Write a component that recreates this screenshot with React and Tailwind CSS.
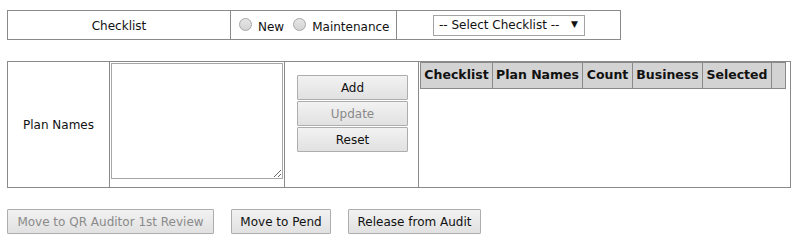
import React from "react";

const btn =
  "h-[25px] border border-[#adadad] bg-gradient-to-b from-[#f2f2f2] to-[#e1e1e1] text-[12px] leading-none flex items-center justify-center rounded-[1px]";

function Radio({ label }) {
  return (
    <label className="flex items-center">
      <span className="w-[13px] h-[13px] rounded-full border border-[#a6a6a6] bg-gradient-to-b from-[#e6e6e6] to-[#d4d4d4] mr-[6px] mt-[-2px]" />
      <span className="mt-[3px]">{label}</span>
    </label>
  );
}

export default function App() {
  return (
    <div
      className="bg-white w-[797px] h-[240px] text-[12px] text-[#111] pt-[10px] pl-[7px]"
      style={{ fontFamily: '"DejaVu Sans", Verdana, sans-serif' }}
    >
      {/* top table */}
      <div className="w-[614px] h-[30px] border border-[#8a8a8a] grid grid-cols-[223px_166px_1fr]">
        <div className="border-r border-[#8a8a8a] flex items-center justify-center pt-[1px]">
          Checklist
        </div>
        <div className="border-r border-[#8a8a8a] flex items-center pl-[8px] gap-[9px]">
          <Radio label="New" />
          <Radio label="Maintenance" />
        </div>
        <div className="flex items-center justify-center pl-[1px]">
          <div className="w-[152px] h-[21px] border border-[#a3a3a3] flex items-center pl-[5px] pr-[6px] justify-between bg-white">
            <span>-- Select Checklist --</span>
            <span className="text-[9px]">▼</span>
          </div>
        </div>
      </div>

      {/* main table */}
      <div className="mt-[21px] w-[784px] h-[127px] border border-[#8a8a8a] grid grid-cols-[102px_175px_134px_1fr]">
        <div className="border-r border-[#8a8a8a] flex items-center justify-center pt-[1px]">
          Plan Names
        </div>
        <div className="border-r border-[#8a8a8a] pl-[1px] pt-[1px]">
          <textarea className="block w-[172px] h-[116px] border border-[#a6a6a6] resize bg-white" />
        </div>
        <div className="border-r border-[#8a8a8a] pl-[12px] pt-[13px]">
          <div className="flex flex-col gap-[1px] w-[111px]">
            <div className={btn}>Add</div>
            <div className={btn + " text-[#8a8a8a]"}>Update</div>
            <div className={btn}>Reset</div>
          </div>
        </div>
        <div className="pl-[1px] pt-[0px]">
          <div className="w-[366px] h-[27px] border border-[#8a8a8a] bg-[#d3d3d3] grid grid-cols-[71px_90px_50px_70px_69px_1fr] font-bold text-[12.5px]">
            <div className="flex items-center justify-center">Checklist</div>
            <div className="border-l border-[#8a8a8a] flex items-center justify-center">Plan Names</div>
            <div className="border-l border-[#8a8a8a] flex items-center justify-center">Count</div>
            <div className="border-l border-[#8a8a8a] flex items-center justify-center">Business</div>
            <div className="border-l border-[#8a8a8a] flex items-center justify-center">Selected</div>
            <div className="border-l border-[#8a8a8a]" />
          </div>
        </div>
      </div>

      {/* bottom buttons */}
      <div className="mt-[21px] flex gap-[17px]">
        <div className={btn + " w-[207px] text-[#8a8a8a]"}>Move to QR Auditor 1st Review</div>
        <div className={btn + " w-[100px]"}>Move to Pend</div>
        <div className={btn + " w-[133px]"}>Release from Audit</div>
      </div>
    </div>
  );
}
